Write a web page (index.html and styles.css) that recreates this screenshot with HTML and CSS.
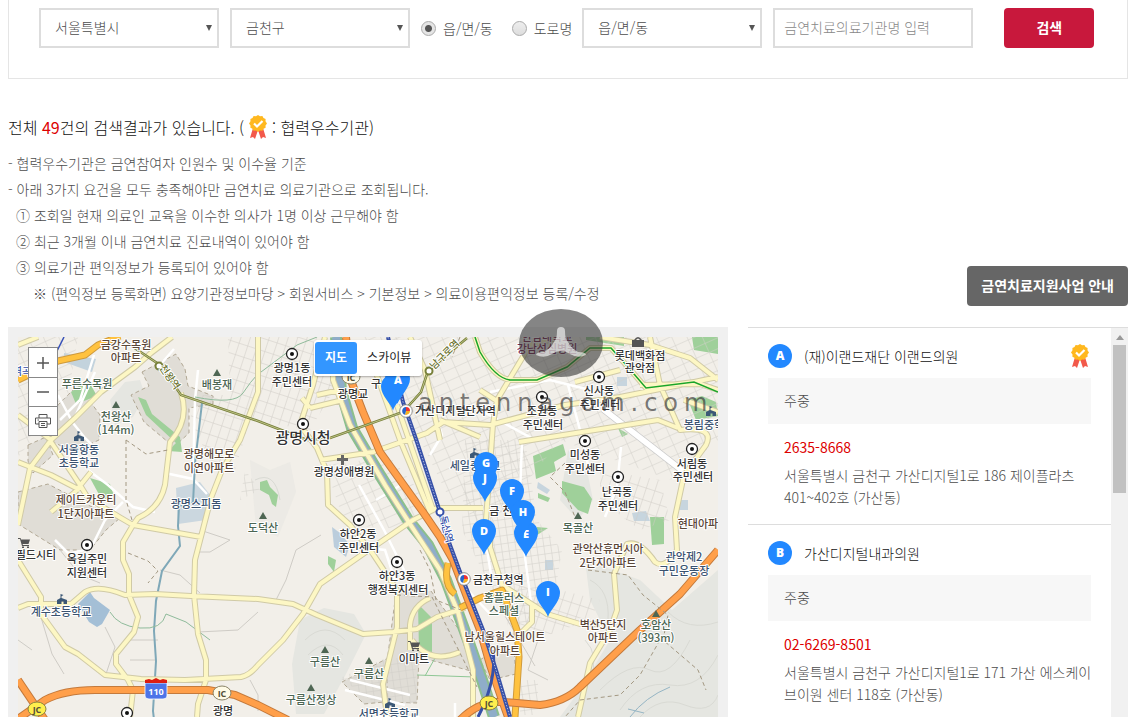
FILE: index.html
```
<!DOCTYPE html>
<html lang="ko">
<head>
    <meta charset="UTF-8">
    <title>금연치료 의료기관 찾기</title>
    <link rel="stylesheet" href="styles.css">
</head>
<body>
    <svg width="0" height="0" class="defs" aria-hidden="true">
        <symbol id="medal" viewBox="0 0 18 24">
            <path d="M4 13 L1 23 L4 22 L6 24 L9 15 L12 24 L14 22 L17 23 L14 13Z" fill="#f2594b"/>
            <path d="M9 0l2 1.3 2.4-.3 1.1 2 2.1 1-.1 2.3L18 8.500l-1.500 2 .1 2.300-2.100 1-1.100 2-2.400-.3L9 17l-2-1.500-2.400.3-1.100-2-2.100-1 .1-2.300L0 8.500l1.500-2.200L1.400 4l2.100-1 1.100-2L7 1.300z" fill="#ffb81f"/>
            <path d="M5 8.500l3 3 5.500-5.500" fill="none" stroke="#fff" stroke-width="2.200"/>
        </symbol>
        <symbol id="pin" viewBox="0 0 24 36" overflow="visible">
            <path d="M12 36C10 29 0 21 0 12a12 12 0 0 1 24 0c0 9-10 17-12 24z" fill="#2288ff"/>
        </symbol>
        <symbol id="office" viewBox="0 0 14 14" overflow="visible">
            <circle cx="7" cy="7" r="5.500" fill="#fff" stroke="#222" stroke-width="1.300"/>
            <circle cx="7" cy="7" r="2" fill="#111"/>
        </symbol>
        <symbol id="school" viewBox="0 0 10 10" overflow="visible">
            <path d="M0 10V6l3.500-2V0l3 1-2 1.200V4L10 6v4H6.500V7.500h-2V10z" fill="#3c5876"/>
        </symbol>
        <symbol id="peak" viewBox="0 0 8 7"><path d="M4 0L8 7H0z" fill="#4e6653"/></symbol>
        <symbol id="cart" viewBox="0 0 12 10"><path d="M0 0h2.500l.6 1.500H12l-1.500 4.500H4.500L5 7h6v1H4L2 1H0zM4 8.500h2V10H4zM9 8.500h2V10H9z" fill="#555"/></symbol>
        <symbol id="metro" viewBox="0 0 14 14" overflow="visible">
            <circle cx="7" cy="7" r="6.300" fill="#fff" stroke="#777" stroke-width=".8"/>
            <path d="M7 3a4 4 0 0 1 4 4H7z" fill="#e33"/><path d="M11 7a4 4 0 0 1-5 3.800L7 7z" fill="#f6b221"/><path d="M6 10.800A4 4 0 0 1 7 3v4z" fill="#2864c8"/>
        </symbol>
    </svg>

    <form class="search" onsubmit="return false">
        <div class="select"><select aria-label="시/도"><option>서울특별시</option></select></div>
        <div class="select"><select aria-label="시/군/구"><option>금천구</option></select></div>
        <div class="radios">
            <label><input type="radio" name="addr" checked>읍/면/동</label>
            <label><input type="radio" name="addr">도로명</label>
        </div>
        <div class="select"><select aria-label="읍/면/동"><option>읍/면/동</option></select></div>
        <input type="text" class="keyword" aria-label="의료기관명" placeholder="금연치료의료기관명 입력">
        <button type="submit" class="btn-search">검색</button>
    </form>

    <h2 class="summary">전체 <em>49</em>건의 검색결과가 있습니다. (<svg class="medal"><use href="#medal"/></svg>: 협력우수기관)</h2>
    <div class="info">
        <ul class="notes">
            <li>- 협력우수기관은 금연참여자 인원수 및 이수율 기준</li>
            <li>- 아래 3가지 요건을 모두 충족해야만 금연치료 의료기관으로 조회됩니다.</li>
            <li class="sub">① 조회일 현재 의료인 교육을 이수한 의사가 1명 이상 근무해야 함</li>
            <li class="sub">② 최근 3개월 이내 금연치료 진료내역이 있어야 함</li>
            <li class="sub">③ 의료기관 편익정보가 등록되어 있어야 함</li>
            <li class="path">※ (편익정보 등록화면) 요양기관정보마당 &gt; 회원서비스 &gt; 기본정보 &gt; 의료이용편익정보 등록/수정</li>
        </ul>
        <button type="button" class="btn-guide">금연치료지원사업 안내</button>
    </div>

    <div class="results">
        <div class="map-frame">
            <div class="map">
                <svg class="map-canvas" viewBox="18 337 700 380" preserveAspectRatio="xMinYMin slice">
                    <defs>
                        <pattern id="gridA" width="9" height="12" patternUnits="userSpaceOnUse" patternTransform="rotate(18)"><path d="M0 0H9M0 0V12" stroke="#cfccc6" fill="none"/></pattern>
                        <pattern id="gridB" width="14" height="10" patternUnits="userSpaceOnUse" patternTransform="rotate(-24)"><path d="M0 0H14M0 0V10" stroke="#d2cfca" fill="none"/></pattern>
                        <pattern id="gridC" width="7" height="8" patternUnits="userSpaceOnUse" patternTransform="rotate(-8)"><path d="M0 0H7M0 0V8" stroke="#d0cdc8" fill="none"/></pattern>
                        <path id="river" d="M336 337L341 390L352 428L378 472L408 520L428 545L446 580L468 640L482 680L494 717"/>
                        <path id="local" d="M18 525L30 468L51 440L75 418L101 392L135 367L151 353L172 337M18 345L38 337M18 415L51 440M18 462L51 475L80 490M91 472L75 492L51 512M51 442L80 485L88 498L121 518L133 525L123 542L123 560L129 574V595L138 617L134 632L116 654V664L128 680L133 690L130 717M133 525L201 537M181 393Q190 420 170 442L165 485Q160 508 138 518L133 525M258 337V392L240 440L222 470L211 498L195 560L194 595L198 634L206 660V680L198 704L197 717M18 608L28 604H71L85 592Q98 584 125 595L155 594L191 596L258 599L293 604L317 615L363 634L393 632L417 629L437 617L465 608M18 560L41 597V614L65 647L78 654L105 675L141 679L185 680L241 677Q250 675 258 665L283 640L303 614L320 584L363 554L413 520L437 508H483M325 337L313 385L300 425L317 448L327 472L328 505L350 525L373 554L397 590V627L383 684L387 717M310 408L343 400M310 408L302 398M317 395L340 390M320 460L373 452L427 433L443 422L490 425L565 405L620 397L680 385L718 377M375 370L400 440L430 512M397 405L433 510M333 340V380L350 425L385 485L410 524L440 570L458 612L473 670V717M519 442L658 420L678 428M486 520L493 424L497 400L530 345M530 345L560 337M480 390L500 403M575 382L620 370M600 337L650 345L690 358L718 380M650 337L660 385L680 430Q715 426 706 445L684 475L675 517L677 550Q665 570 655 562Q640 540 627 544L614 574L617 610L610 630L590 663L578 717M475 337L480 352Q495 378 510 380H537L567 367L590 348H611L628 367L646 388L694 382M490 530V547L502 585L547 614L580 624H600M532 605V622L520 634M410 650V625Q412 606 430 598M412 640Q430 665 460 652M684 400L718 412M410 337L425 370L440 440M640 385L700 384L718 390M440 420L480 437"/>
                        <path id="amber" d="M18 380L58 361L85 355L98 345L120 336M448 563Q443 585 455 594M460 608L480 598L502 590L517 630L519 657L515 717"/>
                        <path id="express" d="M346 337L350 378L363 412L380 452L423 512L440 537L453 560L467 597L480 630L490 665L503 703L508 717M18 719L45 700Q64 690 95 690H208L235 695L258 705L288 720M18 680L45 720M460 720Q480 700 505 702L540 705Q565 702 580 687L640 630L680 594L718 550"/>
                        <path id="rail" d="M388 337L403 402L417 442L440 512L450 545L463 580L483 630L496 670L510 717"/>
                        <path id="line7" d="M130 345L160 365L181 395L258 421L307 440L330 438L403 412L421 392L428 371L467 338"/>
                    </defs>
                    <rect x="18" y="337" width="700" height="380" fill="#f2efe9"/>

                    <!-- hills -->
                    <g fill="#e5e6e1">
                        <path d="M585 560L640 580L672 610L718 570V717H560L580 690L610 640L590 600Z"/>
                        <path d="M110 400l15-18 15-2 5 15-12 22-18 8z"/>
                        <path d="M300 620l24-12 30 6 12 20-20 40-22 40h-28l-4-50z"/>
                        <path d="M568 450l20 25 5 25-15 20-18-20z"/>
                        <path d="M250 460l20 10 20-8 6 30-18 45-22-10z" opacity=".5"/>
                    </g>
                    <g fill="none" stroke="#d9dad4">
                        <path d="M600 690q30-30 50-20t40-30M620 710q20-30 50-25t48-30M640 717q20-22 45-12t33-10M590 580q20 10 18 40M668 612q20 20 50 10M585 640q15 15 5 40M305 640q20-20 40 0M308 655q20-20 35 0M255 480q20-10 25 20"/>
                    </g>

                    <!-- built-up blocks -->
                    <g fill="#e0ddd6" stroke="#a39882" stroke-dasharray="4 3" stroke-width=".8">
                        <path d="M142 372l34-18 9 15 3 17 25 10v8l-24 4v25l-15 14-30-25-13-27 18-9z"/>
                        <path d="M50 440l8-35 20-20 22 30-1 25-27 12z"/>
                        <path d="M28 445l18-8 7 18-20 18-5-12z"/>
                        <path d="M18 492l30-8 42 22 30 12-14 12-16 20H60L18 524z"/>
                        <path d="M396 593l35-2 52 72-12 8-52-14-2 46-30-1v-40z"/>
                        <path d="M342 682l46-24-4 44-20 2z"/>
                        <path d="M480 660l22-15 12 6 2 23-26 6z"/>
                    </g>

                    <!-- parks and water -->
                    <g fill="#9fd09a">
                        <path d="M71 392l17-12 9 16-21 8z"/><path d="M138 397l8 3 6 14 28 23 2 15-14-1 8-8-30-28z"/>
                        <path d="M90 478l20 6 4 12-12 4z"/><path d="M260 482l7-2 3 7 8 8-2 12-4-3-3-9-9-5z"/>
                        <path d="M533 456l30-12 3 11-12 7 2 9-20 8z"/><path d="M562 481l22 6 8 12-4 15-10-4-16-17z"/>
                        <path d="M688 400l14-4 14 6 2 14-22 4z"/><path d="M692 337h26v17l-24-4z"/><path d="M586 337h38v9l-38-6z"/>
                        <path d="M650 517h14v27l-12 1z"/><path d="M418 604l14 14v34h-13z"/><path d="M328 556l8 4-2 12-6-8z"/>
                        <path d="M538 493l12 5-2 4-10-4z"/><path d="M537 527l11 1-14 9z"/><path d="M618 428l10 6-6 3z"/>
                    </g>
                    <g fill="#a4bfd6">
                        <path d="M78 604l12-12 4 6 16 12-8 14-5 3-8-5z"/><path d="M332 527l8 6 10 12-4 12-12-10z" opacity=".7"/>
                        <path d="M176 488l24-6 14 18-8 20-28 4z" opacity=".5"/><path d="M64 353l32 6-4 13-28-10z" opacity=".6"/>
                        <path d="M617 377h10v9h-10zM632 513l14-2 4 10h-16zM545 560h8v10h-8zM538 482l12 8-3 4-10-6zM678 500h10v10h-10z" opacity=".55"/>
                    </g>

                    <!-- street grids -->
                    <path d="M228 337H335L340 380L310 430L250 420L235 470L210 460L190 420L195 395L230 395Z" fill="url(#gridA)"/>
                    <path d="M358 337H718V440L672 480L600 455L560 440L490 530L450 500L400 400Z" fill="url(#gridB)"/>
                    <path d="M325 465l65-8 45 52-30 20-60-4z" fill="url(#gridB)"/>
                    <path d="M465 440h60l12 80 25 30-10 60-40 20-50-100z" fill="url(#gridC)"/>
                    <path d="M500 580l60 10 40 10-10 20-50 18h-30z" fill="url(#gridA)"/>
                    <path d="M600 470l60 10 10 40-30 10-40-30z" fill="url(#gridA)"/>
                    <path d="M340 678l50-22 26 8v40h-40z" fill="url(#gridC)"/>
                    <path d="M18 337h60l-10 60-50 60z" fill="url(#gridB)"/>
                    <path d="M245 470l15 20-20 10zM520 680h18v35h-18z" fill="url(#gridC)"/>
                    <g fill="none" stroke="#cfccc6">
                        <path d="M40 614l12 40 12 20M105 627l10 20-10 30M200 530l30 10-20 12h-10M258 612l-20 18-40 2M130 640h28M130 660h26M18 640l14 10M60 550l20 25 20 8M276 600l10-20 10-30 25-15M250 680l8 15v16M505 616l30 50M538 640l-10 30 20 10M160 570l20 5 20 18"/>
                    </g>
                    <g fill="none" stroke="#fff" stroke-width="2.500">
                        <path d="M58 395l15 28 12 15 10 10M60 420l20-20 14-45M95 372l-20 45M88 470l20 15 25 22 22 5M55 540l14 14 22-6 14-28 18-18M165 473l28 6 14 15M193 480l2-80 3-30M174 349l-14 16"/>
                        <path d="M359 485l25 45 25 50M376 500l30-18M463 585l28 30M482 520l10 60M524 550l8 60M430 455l12-20-12-38M568 385l16 60 6 30M605 517l12-30 4-40M395 580l-10-30-45-5M519 520l3-78M490 392l60-12 40 10M345 690l60 15M350 680l60 15M455 703v14M480 410l55 30"/>
                    </g>
                    <path d="M603 409L684 472" stroke="#c9c9c9" stroke-width="7"/><path d="M603 409L684 472" stroke="#fff" stroke-width="5.500"/>

                    <!-- streams and river -->
                    <g fill="none" stroke="#7fa8b8">
                        <path d="M202 403l-7 60-2 40-14 3-1 20 2 20-18 25-6 30-2 30 2 30-3 50 2 17 14 12" stroke-width="2"/>
                        <path d="M110 612q8 14 30 16t26-14l20 8 24 18M195 397q40 8 48-4t14-18l40-30 20-8" stroke="#8fbb9b" stroke-width="1"/>
                        <path d="M417 675l58 2M425 676l10-18" stroke="#8fc795" stroke-width="1"/>
                        <path d="M630 717q15-20 40-30M628 709l16 4" stroke="#95b5c4"/>
                    </g>
                    <g fill="none">
                        <use href="#river" stroke="#8cbf8c" stroke-width="12"/>
                        <use href="#river" stroke="#8fadc9" stroke-width="8"/>
                    </g>

                    <!-- roads: casing, then fill -->
                    <g fill="none" stroke-linejoin="round">
                        <use href="#local" stroke="#d0caa6" stroke-width="6"/>
                        <use href="#local" stroke="#fdf7c4" stroke-width="4"/>
                        <use href="#amber" stroke="#cf9a3c" stroke-width="7"/>
                        <use href="#amber" stroke="#ffc23f" stroke-width="5"/>
                        <use href="#express" stroke="#c47a3c" stroke-width="8"/>
                        <use href="#express" stroke="#ff9f4a" stroke-width="6"/>
                    </g>

                    <!-- rail lines -->
                    <g fill="none">
                        <path d="M493 650Q497 680 478 717" stroke="#3650a8" stroke-width="3"/>
                        <use href="#rail" stroke="#3650a8" stroke-width="4"/>
                        <use href="#rail" stroke="#aeb9e0" stroke-dasharray="1.500 1.500"/>
                        <use href="#line7" stroke="#78803a" stroke-width="2.500"/>
                        <use href="#line7" stroke="#d9dca8" stroke-width=".7"/>
                        <path d="M475 337L480 352Q495 378 510 380H537L567 367L590 348H611L628 367L646 388L694 382L718 392" stroke="#1aa52a" stroke-width="1.500"/>
                        <path d="M45 375L64 337" stroke="#3650b8" stroke-width="1.500"/>
                        <path d="M126 440v60l6 20M126 440l20 14 22-4M128 553l20 8 10 10-10 12M565 463l-15 14 15 15 10 25M588 570l40 5 15 20 25 20-5 25 35 30 8 20M660 640l-20 35-20 20-40 5-15 17M420 550l10 20 6 30 25 10M397 595l35 2 45 90M460 337l-8 20" stroke="#a39882" stroke-dasharray="4 3"/>
                    </g>
                    <g fill="#fff" stroke-width="2">
                        <circle cx="159" cy="366" r="3.500" stroke="#78803a"/><circle cx="429" cy="371" r="3.500" stroke="#78803a"/><circle cx="440" cy="512" r="3.500" stroke="#3650a8"/>
                    </g>

                    <!-- route shields -->
                    <g class="shield">
                        <ellipse cx="351" cy="377" rx="9" ry="7" fill="#fffbe6" stroke="#8a8468"/><text x="351" y="381">IC</text>
                        <ellipse cx="222" cy="693" rx="9" ry="7" fill="#fffbe6" stroke="#8a8468"/><text x="222" y="697">IC</text>
                        <ellipse cx="37" cy="709" rx="9" ry="7" fill="#ffef4d" stroke="#8a8440"/><text x="37" y="713">JC</text>
                        <ellipse cx="489" cy="703" rx="9" ry="7" fill="#ffef4d" stroke="#8a8440"/><text x="489" y="707">JC</text>
                        <path d="M145 683h22v13q0 3-4 3h-14q-4 0-4-3z" fill="#4d74e8" stroke="#fff" stroke-width=".8"/>
                        <path d="M145 683v-3l4-1 3 1 4-2 4 2 3-1 4 1v3z" fill="#dc1d12"/><text x="156" y="695" class="num">110</text>
                    </g>

                    <!-- place icons -->
                    <use href="#office" x="285" y="347" width="14" height="14"/><use href="#office" x="296" y="417" width="14" height="14"/>
                    <use href="#office" x="592" y="370" width="14" height="14"/><use href="#office" x="535" y="390" width="14" height="14"/>
                    <use href="#office" x="578" y="434" width="14" height="14"/><use href="#office" x="685" y="442" width="14" height="14"/>
                    <use href="#office" x="611" y="470" width="14" height="14"/><use href="#office" x="352" y="513" width="14" height="14"/>
                    <use href="#office" x="390" y="555" width="14" height="14"/><use href="#office" x="80" y="538" width="14" height="14"/>
                    <use href="#office" x="120" y="706" width="14" height="14"/>
                    <use href="#school" x="74" y="431" width="10" height="10"/><use href="#school" x="57" y="594" width="10" height="10"/>
                    <use href="#school" x="470" y="448" width="10" height="10"/><use href="#school" x="706" y="406" width="10" height="10"/>
                    <use href="#school" x="385" y="698" width="10" height="10"/>
                    <use href="#peak" x="112" y="401" width="8" height="7"/><use href="#peak" x="213" y="369" width="8" height="7"/>
                    <use href="#peak" x="259" y="512" width="8" height="7"/><use href="#peak" x="574" y="512" width="8" height="7"/>
                    <use href="#peak" x="321" y="646" width="8" height="7"/><use href="#peak" x="365" y="657" width="8" height="7"/>
                    <use href="#peak" x="307" y="684" width="8" height="7"/><use href="#peak" x="652" y="610" width="8" height="7"/>
                    <use href="#cart" x="408" y="641" width="12" height="10"/><use href="#cart" x="18" y="538" width="12" height="10"/>
                    <path d="M341 455h3v3h4v3h-4v4h-3v-4h-4v-3h4z" fill="#666"/>
                    <path d="M634 340q4-6 8 0h2v7h-12v-7zM636 340h4q-2-3-4 0z" fill="#555"/>

                    <g class="label">
                        <text x="292" y="372">광명1동</text><text x="292" y="386">주민센터</text>
                        <text x="353" y="398">광명교</text><text x="376" y="388">구</text>
                        <text x="344" y="476">광명성애병원</text>
                        <text x="640" y="360">롯데백화점</text><text x="640" y="372">관악점</text>
                        <text x="599" y="395">신사동</text><text x="600" y="409">주민센터</text>
                        <text x="542" y="415">조원동</text><text x="543" y="429">주민센터</text>
                        <text x="585" y="459">미성동</text><text x="585" y="473">주민센터</text>
                        <text x="692" y="468">서림동</text><text x="693" y="481">주민센터</text>
                        <text x="617" y="496">난곡동</text><text x="618" y="510">주민센터</text>
                        <text x="358" y="538">하안2동</text><text x="359" y="552">주민센터</text>
                        <text x="397" y="580">하안3동</text><text x="398" y="594">행정복지센터</text>
                        <text x="87" y="563">옥길주민</text><text x="87" y="577">지원센터</text>
                        <text x="36" y="559">필드시티</text><text x="414" y="663">이마트</text>
                        <text x="415" y="415" class="start">가산디지털단지역</text><text x="473" y="584" class="start">금천구청역</text>
                        <text x="223" y="715">광명</text><text x="501" y="515">금 천</text>
                    </g>
                    <g class="label brown">
                        <text x="126" y="349">금강수목원</text><text x="126" y="362">아파트</text>
                        <text x="209" y="458">광명해모로</text><text x="209" y="472">이연아파트</text>
                        <text x="86" y="504">제이드카운티</text><text x="86" y="518">1단지아파트</text>
                        <text x="608" y="553">관악산휴먼시아</text><text x="608" y="567">2단지아파트</text>
                        <text x="603" y="629">벽산5단지</text><text x="603" y="642">아파트</text>
                        <text x="505" y="641">남서울힐스테이트</text><text x="505" y="655">아파트</text>
                        <text x="698" y="528">현대아파</text>
                    </g>
                    <g class="label green">
                        <text x="87" y="388">푸른수목원</text><text x="217" y="389">배봉재</text>
                        <text x="116" y="421">천왕산</text><text x="116" y="434">(144m)</text>
                        <text x="263" y="532">도덕산</text><text x="578" y="532">목골산</text>
                        <text x="325" y="666">구름산</text><text x="369" y="678">구름산</text><text x="311" y="704">구름산정상</text>
                        <text x="656" y="629">호암산</text><text x="656" y="642">(393m)</text>
                        <text x="504" y="602">홈플러스</text><text x="504" y="615">스페셜</text>
                    </g>
                    <g class="label blue">
                        <text x="79" y="454">서울항동</text><text x="79" y="467">초등학교</text>
                        <text x="196" y="508">광명스피돔</text><text x="61" y="616">계수초등학교</text>
                        <text x="475" y="470">세일중학교</text><text x="704" y="429">봉림중학</text>
                        <text x="684" y="561">관악제2</text><text x="684" y="575">구민운동장</text>
                        <text x="389" y="718">서면초등학교</text>
                    </g>
                    <g class="label line">
                        <text transform="translate(167 379) rotate(55)">천왕역</text>
                        <text transform="translate(447 357) rotate(-45)">남구로역</text>
                        <text transform="translate(443 530) rotate(75)" class="line1">독산역</text>
                        <text x="22" y="375" class="line1">역곡</text>
                    </g>
                    <g class="label hospital">
                        <text x="547" y="341">한림대학교</text><text x="547" y="353">강남성심병원</text>
                    </g>
                    <text x="303" y="443" class="city">광명시청</text>

                    <g class="pins">
                        <use href="#pin" x="385" y="366" width="25" height="38"/>
                        <use href="#pin" x="381" y="374" width="24" height="37"/><text x="398" y="384">A</text>
                        <use href="#pin" x="474" y="452" width="24" height="36"/>
                        <use href="#pin" x="473" y="466" width="24" height="36"/><text x="486" y="467">G</text><text x="485" y="482">J</text>
                        <use href="#pin" x="500" y="479" width="24" height="36"/><text x="512" y="495">F</text>
                        <use href="#pin" x="514" y="521" width="24" height="36"/><text x="526" y="538">E</text>
                        <use href="#pin" x="511" y="500" width="24" height="36"/><text x="523" y="516">H</text>
                        <use href="#pin" x="472" y="519" width="24" height="36"/><text x="484" y="535">D</text>
                        <use href="#pin" x="536" y="581" width="24" height="36"/><text x="548" y="596">I</text>
                    </g>
                    <use href="#metro" x="399" y="404" width="14" height="14"/><use href="#metro" x="457" y="572" width="14" height="14"/>
                </svg>
                <div class="map-type">
                    <button type="button" class="on">지도</button>
                    <button type="button">스카이뷰</button>
                </div>
                <div class="map-tools">
                    <button type="button" aria-label="확대"><svg viewBox="0 0 16 16"><path d="M2 8H14M8 2V14" stroke-width="1.500"/></svg></button>
                    <button type="button" aria-label="축소"><svg viewBox="0 0 16 16"><path d="M2 8H14" stroke-width="1.500"/></svg></button>
                    <button type="button" aria-label="인쇄"><svg viewBox="0 0 16 16"><path d="M4 5V1.500H12V5M4 11H.5V5H15.500V11H12M4 8.500H12V14.500H4ZM6 10.500H10M6 12.500H10M2.500 7H4"/></svg></button>
                </div>
                <div class="watermark">antennagom.com</div>
                <svg class="logo" viewBox="0 0 84 68">
                    <ellipse cx="42" cy="34" rx="42" ry="34" fill="#333" fill-opacity=".6"/>
                    <path d="M38 22q0-4 4-4t4 4q0 8 3 11 3 6 10 10 8 0 8 3-8 4-16-1-4-3-9-3t-9 3q-8 5-16 1 0-3 8-3 7-4 10-10 3-3 3-11z" fill="#fff" fill-opacity=".6"/>
                </svg>
            </div>
        </div>

        <div class="list-panel">
            <ul class="list">
                <li>
                    <div class="head"><span class="mark">A</span><h3>(재)이랜드재단 이랜드의원</h3><svg class="medal"><use href="#medal"/></svg></div>
                    <p class="hours">주중</p>
                    <p class="tel">2635-8668</p>
                    <p class="addr">서울특별시 금천구 가산디지털1로 186 제이플라츠 401~402호 (가산동)</p>
                </li>
                <li>
                    <div class="head"><span class="mark">B</span><h3>가산디지털내과의원</h3></div>
                    <p class="hours">주중</p>
                    <p class="tel">02-6269-8501</p>
                    <p class="addr">서울특별시 금천구 가산디지털1로 171 가산 에스케이브이원 센터 118호 (가산동)</p>
                </li>
            </ul>
            <div class="scrollbar"><span class="up"></span><span class="thumb"></span></div>
        </div>
    </div>
</body>
</html>
```
FILE: styles.css
```
* { box-sizing: border-box; margin: 0; padding: 0; }
body { display: flex; flex-direction: column; height: 100vh; padding: 0 9px 0 8px; overflow: hidden; background: #fff; color: #4c4c4c; font: 300 14px/22px "Noto Sans CJK KR", sans-serif; }
button, input, select { font: inherit; color: inherit; }
button { border: 0; cursor: pointer; }
ul { list-style: none; }
.defs { position: absolute; }

/* search bar */
.search { display: flex; align-items: center; padding: 8px 30px 30px; border: 1px solid #e5e5e5; border-top: 0; }
.select { position: relative; flex: 0 1 180px; margin-right: 11px; }
.select select { width: 100%; height: 40px; padding: 0 14px 2px; border: 2px solid #ddd; background: #fff; appearance: none; }
.select::after { content: ""; position: absolute; top: 17px; right: 7px; border: 3px solid transparent; border-top: 6px solid #555; border-bottom: 0; pointer-events: none; }
.radios { display: flex; gap: 19px; margin-right: 10px; white-space: nowrap; }
.radios label { display: flex; align-items: center; gap: 7px; }
.radios input { width: 15px; height: 15px; border: 1px solid #aaa; border-radius: 50%; background: linear-gradient(#eee, #ddd); appearance: none; }
.radios input:checked { background: radial-gradient(circle, #555 3px, #e5e5e5 4px); }
.keyword { flex: 0 1 200px; min-width: 0; height: 40px; padding: 0 9px 2px; border: 2px solid #ddd; }
.keyword::placeholder { color: #888; }
.btn-search { width: 90px; height: 40px; margin-left: 31px; padding-bottom: 2px; border-radius: 4px; background: #c8183c; color: #fff; font-weight: 700; }

/* result summary */
.summary { display: flex; align-items: center; margin: 36px 0 11px; color: #111; font-size: 16px; font-weight: 300; line-height: 24px; white-space: pre; }
.summary em { color: #d00; font-style: normal; font-weight: 400; }
.medal { width: 18px; height: 24px; }
.summary .medal { margin: 0 5px; }
.info { display: flex; align-items: flex-end; justify-content: space-between; }
.notes { line-height: 26px; }
.notes .sub { padding-left: 8px; }
.notes .path { padding-left: 25px; }
.btn-guide { height: 40px; padding: 0 14px 2px; border-radius: 4px; background: #666; color: #fff; font-weight: 700; white-space: nowrap; }

/* map */
.results { display: flex; flex: 1; gap: 20px; min-height: 0; margin-top: 21px; }
.map-frame { flex: 1; min-width: 0; padding: 10px 10px 0; background: #f0f0f0; }
.map { position: relative; height: 100%; }
.map-canvas { display: block; width: 100%; height: 100%; }
.label text, .city { font-size: 11px; font-weight: 500; fill: #333; text-anchor: middle; stroke: #fff; stroke-width: 2px; stroke-linejoin: round; paint-order: stroke; }
.label .start { text-anchor: start; }
.label.brown text { fill: #5a4638; }
.label.green text { fill: #4c6553; }
.label.blue text { fill: #3a5270; }
.label.line text { font-size: 10px; fill: #6b7330; }
.label.line .line1 { fill: #3650a8; }
.label.hospital text { fill: #7c2a50; }
.map-canvas .city { font-size: 15px; }
.shield text { fill: #55503a; font: 700 9px "Open Sans", sans-serif; text-anchor: middle; }
.shield .num { fill: #fff; }
.pins text { fill: #fff; font: 800 11px "Open Sans", sans-serif; text-anchor: middle; }
.map-type { position: absolute; top: 3px; left: 296px; display: flex; padding: 2px 1px; border-radius: 3px; background: #fff; box-shadow: 0 1px 2px rgba(0, 0, 0, .3); }
.map-type button { height: 32px; padding: 0 10px 2px; border-radius: 3px; background: #fff; color: #222; font-size: 12px; font-weight: 400; }
.map-type .on { background: #3396ff; color: #fff; font-weight: 700; }
.map-tools { position: absolute; top: 10px; left: 10px; border: 1px solid #888; background: #fff; }
.map-tools button { display: flex; align-items: center; justify-content: center; width: 28px; height: 29px; background: #fff; }
.map-tools button + button { border-top: 1px solid #888; }
.map-tools svg { width: 16px; height: 16px; fill: none; stroke: #555; }
.watermark { position: absolute; top: 50px; left: 400px; color: rgba(50, 50, 50, .65); font: 24px/32px "DejaVu Sans", sans-serif; letter-spacing: 6px; }
.logo { position: absolute; top: -28px; left: 501px; width: 84px; height: 68px; }

/* clinic list */
.list-panel { display: flex; flex: 0 0 380px; }
.list { flex: 1; min-width: 0; overflow: hidden; }
.list li { padding: 16px 20px 15px; border-top: 1px solid #ddd; }
.head { display: flex; align-items: center; height: 24px; margin-bottom: 10px; }
.head h3 { flex: 1; color: #111; font-size: 14px; font-weight: 300; }
.head .medal { margin-right: 2px; }
.mark { width: 24px; margin-right: 12px; border-radius: 50%; background: #2288ff; color: #fff; font: 800 12px/24px "Open Sans", sans-serif; text-align: center; }
.hours { padding: 11px 16px 13px; background: #f7f7f7; }
.tel { margin: 12px 16px 6px; color: #d00; font-weight: 400; }
.addr { margin: 0 -8px 1px 16px; }
.scrollbar { display: flex; flex-direction: column; align-items: center; gap: 5px; width: 17px; padding-top: 7px; border-top: 1px solid #ddd; background: #f1f1f1; }
.scrollbar .up { border: 4px solid transparent; border-bottom: 5px solid #999; border-top: 0; }
.scrollbar .thumb { width: 13px; height: 148px; background: #c1c1c1; }
```
